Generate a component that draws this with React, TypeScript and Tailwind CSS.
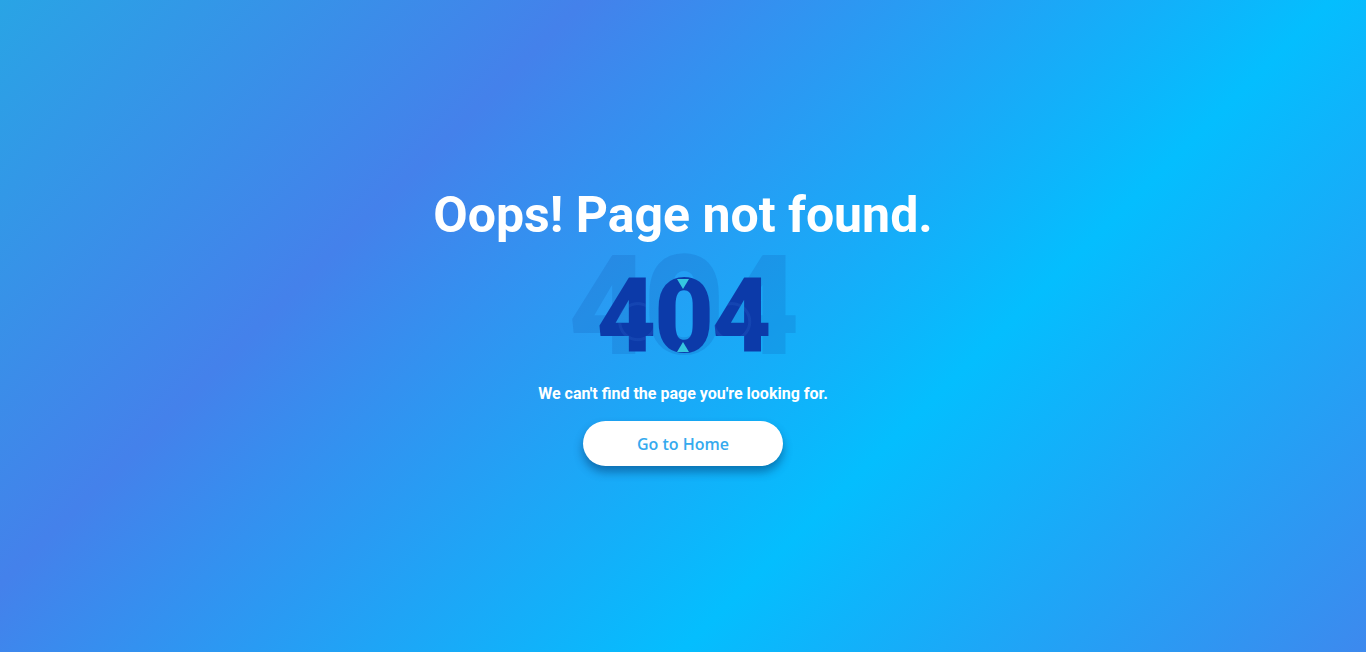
export default function App() {
  return (
    <div className="flex h-[652px] flex-col items-center justify-center bg-[linear-gradient(135deg,#29a4e5_0%,#4481eb_29%,#04befe_66%,#3d89ee_100%)] font-['Roboto',sans-serif]">
      <h1 className="mt-[4px] text-[50px] font-bold leading-none text-white">Oops! Page not found.</h1>

      {/* 404 with its shadow copy behind */}
      <div className="-mt-[4px] grid">
        <span className="col-start-1 row-start-1 pr-[4px] text-center text-[140px] font-black leading-none tracking-[-6px] text-[rgba(10,50,140,0.13)]">
          404
        </span>
        <span className="relative col-start-1 row-start-1 mb-[8px] self-end justify-self-center bg-[radial-gradient(circle_at_24%_55%,transparent_0_16px,rgba(60,120,220,0.18)_17px_19px,transparent_20px),radial-gradient(circle_at_78%_55%,transparent_0_16px,rgba(60,120,220,0.18)_17px_19px,transparent_20px),linear-gradient(#0c3aa9,#0c3aa9)] bg-clip-text text-[103px] font-black leading-none tracking-[-2px] text-transparent">
          404
          <span className="absolute left-1/2 top-[14px] h-0 w-0 -translate-x-1/2 border-x-[6px] border-t-[10px] border-x-transparent border-t-[#35c6e0]" />
          <span className="absolute bottom-[16px] left-1/2 h-0 w-0 -translate-x-1/2 border-x-[6px] border-b-[10px] border-x-transparent border-b-[#35c6e0]" />
        </span>
      </div>

      <p className="mt-[10px] text-[16px] font-bold leading-none text-white">
        We can't find the page you're looking for.
      </p>

      <button
        type="button"
        className="mt-[19px] h-[45px] w-[200px] rounded-full bg-white font-['Open_Sans',sans-serif] text-[16px] font-semibold text-[#35aaee] shadow-[0_6px_10px_rgba(0,40,90,0.45)]"
      >
        Go to Home
      </button>
    </div>
  );
}
